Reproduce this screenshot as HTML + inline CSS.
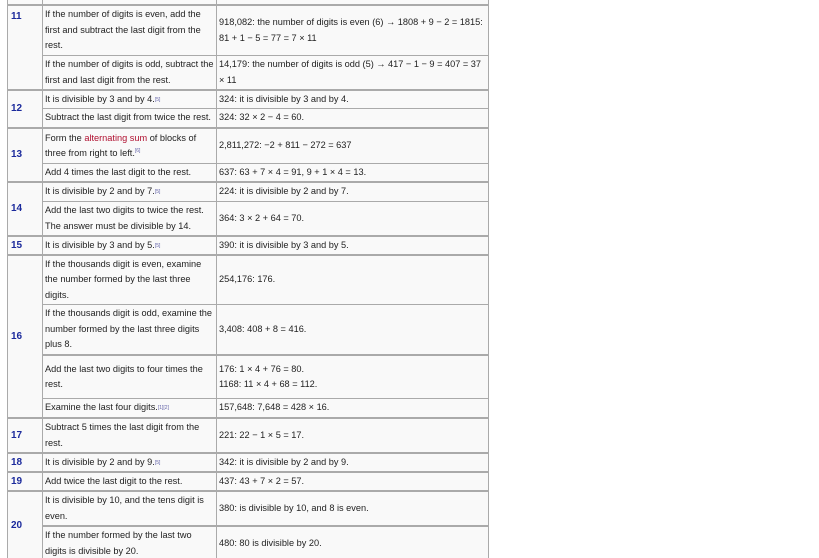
<!DOCTYPE html>
<html><head><meta charset="utf-8"><style>
html,body{margin:0;padding:0;background:#fff;width:819px;height:558px;overflow:hidden}
body{position:relative;font-family:"Liberation Sans",sans-serif;font-size:9.2px;color:#222}
.c{position:absolute;box-sizing:border-box;border:1px solid #aaa;background:#f9f9f9;display:flex;align-items:center;padding:0 2px;line-height:15.5px;white-space:nowrap;overflow:hidden}
.n{color:#1b2a9c;font-weight:bold;font-size:10px;align-items:center;padding-left:3px}
.g{border-top:2px solid #aaa}
sup{font-size:5px;color:#66a;line-height:0}
.r{color:#b01030}
</style></head><body>
<div class="c" style="left:7px;top:-10px;width:36px;height:15px"></div>
<div class="c" style="left:42px;top:-10px;width:175px;height:15px"></div>
<div class="c" style="left:216px;top:-10px;width:273px;height:15px"></div>

<div class="c n g" style="left:7px;top:4px;width:36px;height:86px;align-items:flex-start;padding-top:3px">11</div>
<div class="c g" style="left:42px;top:4px;width:175px;height:52px"><span>If the number of digits is even, add the<br>first and subtract the last digit from the<br>rest.</span></div>
<div class="c g" style="left:216px;top:4px;width:273px;height:52px"><span>918,082: the number of digits is even (6) → 1808 + 9 − 2 = 1815:<br>81 + 1 − 5 = 77 = 7 × 11</span></div>
<div class="c" style="left:42px;top:55px;width:175px;height:35px"><span>If the number of digits is odd, subtract the<br>first and last digit from the rest.</span></div>
<div class="c" style="left:216px;top:55px;width:273px;height:35px"><span>14,179: the number of digits is odd (5) → 417 − 1 − 9 = 407 = 37<br>× 11</span></div>

<div class="c n g" style="left:7px;top:89px;width:36px;height:39px">12</div>
<div class="c g" style="left:42px;top:89px;width:175px;height:20px">It is divisible by 3 and by 4.<sup>[5]</sup></div>
<div class="c g" style="left:216px;top:89px;width:273px;height:20px">324: it is divisible by 3 and by 4.</div>
<div class="c" style="left:42px;top:108px;width:175px;height:20px">Subtract the last digit from twice the rest.</div>
<div class="c" style="left:216px;top:108px;width:273px;height:20px">324: 32 × 2 − 4 = 60.</div>

<div class="c n g" style="left:7px;top:127px;width:36px;height:55px">13</div>
<div class="c g" style="left:42px;top:127px;width:175px;height:37px"><span>Form the <span class="r">alternating sum</span> of blocks of<br>three from right to left.<sup>[6]</sup></span></div>
<div class="c g" style="left:216px;top:127px;width:273px;height:37px">2,811,272: −2 + 811 − 272 = 637</div>
<div class="c" style="left:42px;top:163px;width:175px;height:19px">Add 4 times the last digit to the rest.</div>
<div class="c" style="left:216px;top:163px;width:273px;height:19px">637: 63 + 7 × 4 = 91, 9 + 1 × 4 = 13.</div>

<div class="c n g" style="left:7px;top:181px;width:36px;height:55px">14</div>
<div class="c g" style="left:42px;top:181px;width:175px;height:21px">It is divisible by 2 and by 7.<sup>[5]</sup></div>
<div class="c g" style="left:216px;top:181px;width:273px;height:21px">224: it is divisible by 2 and by 7.</div>
<div class="c" style="left:42px;top:201px;width:175px;height:35px"><span>Add the last two digits to twice the rest.<br>The answer must be divisible by 14.</span></div>
<div class="c" style="left:216px;top:201px;width:273px;height:35px">364: 3 × 2 + 64 = 70.</div>

<div class="c n g" style="left:7px;top:235px;width:36px;height:20px">15</div>
<div class="c g" style="left:42px;top:235px;width:175px;height:20px">It is divisible by 3 and by 5.<sup>[5]</sup></div>
<div class="c g" style="left:216px;top:235px;width:273px;height:20px">390: it is divisible by 3 and by 5.</div>

<div class="c n g" style="left:7px;top:254px;width:36px;height:164px">16</div>
<div class="c g" style="left:42px;top:254px;width:175px;height:51px"><span>If the thousands digit is even, examine<br>the number formed by the last three<br>digits.</span></div>
<div class="c g" style="left:216px;top:254px;width:273px;height:51px">254,176: 176.</div>
<div class="c" style="left:42px;top:304px;width:175px;height:51px"><span>If the thousands digit is odd, examine the<br>number formed by the last three digits<br>plus 8.</span></div>
<div class="c" style="left:216px;top:304px;width:273px;height:51px">3,408: 408 + 8 = 416.</div>
<div class="c g" style="left:42px;top:354px;width:175px;height:45px"><span>Add the last two digits to four times the<br>rest.</span></div>
<div class="c g" style="left:216px;top:354px;width:273px;height:45px"><span>176: 1 × 4 + 76 = 80.<br>1168: 11 × 4 + 68 = 112.</span></div>
<div class="c" style="left:42px;top:398px;width:175px;height:20px">Examine the last four digits.<sup>[1][2]</sup></div>
<div class="c" style="left:216px;top:398px;width:273px;height:20px">157,648: 7,648 = 428 × 16.</div>

<div class="c n g" style="left:7px;top:417px;width:36px;height:36px">17</div>
<div class="c g" style="left:42px;top:417px;width:175px;height:36px"><span>Subtract 5 times the last digit from the<br>rest.</span></div>
<div class="c g" style="left:216px;top:417px;width:273px;height:36px">221: 22 − 1 × 5 = 17.</div>

<div class="c n g" style="left:7px;top:452px;width:36px;height:20px">18</div>
<div class="c g" style="left:42px;top:452px;width:175px;height:20px">It is divisible by 2 and by 9.<sup>[5]</sup></div>
<div class="c g" style="left:216px;top:452px;width:273px;height:20px">342: it is divisible by 2 and by 9.</div>

<div class="c n g" style="left:7px;top:471px;width:36px;height:20px">19</div>
<div class="c g" style="left:42px;top:471px;width:175px;height:20px">Add twice the last digit to the rest.</div>
<div class="c g" style="left:216px;top:471px;width:273px;height:20px">437: 43 + 7 × 2 = 57.</div>

<div class="c n g" style="left:7px;top:490px;width:36px;height:80px;align-items:flex-start;padding-top:26px">20</div>
<div class="c g" style="left:42px;top:490px;width:175px;height:36px"><span>It is divisible by 10, and the tens digit is<br>even.</span></div>
<div class="c g" style="left:216px;top:490px;width:273px;height:36px">380: is divisible by 10, and 8 is even.</div>
<div class="c g" style="left:42px;top:525px;width:175px;height:40px;align-items:flex-start;padding-top:1px"><span>If the number formed by the last two<br>digits is divisible by 20.</span></div>
<div class="c g" style="left:216px;top:525px;width:273px;height:40px;align-items:flex-start;padding-top:9px">480: 80 is divisible by 20.</div>
</body></html>
